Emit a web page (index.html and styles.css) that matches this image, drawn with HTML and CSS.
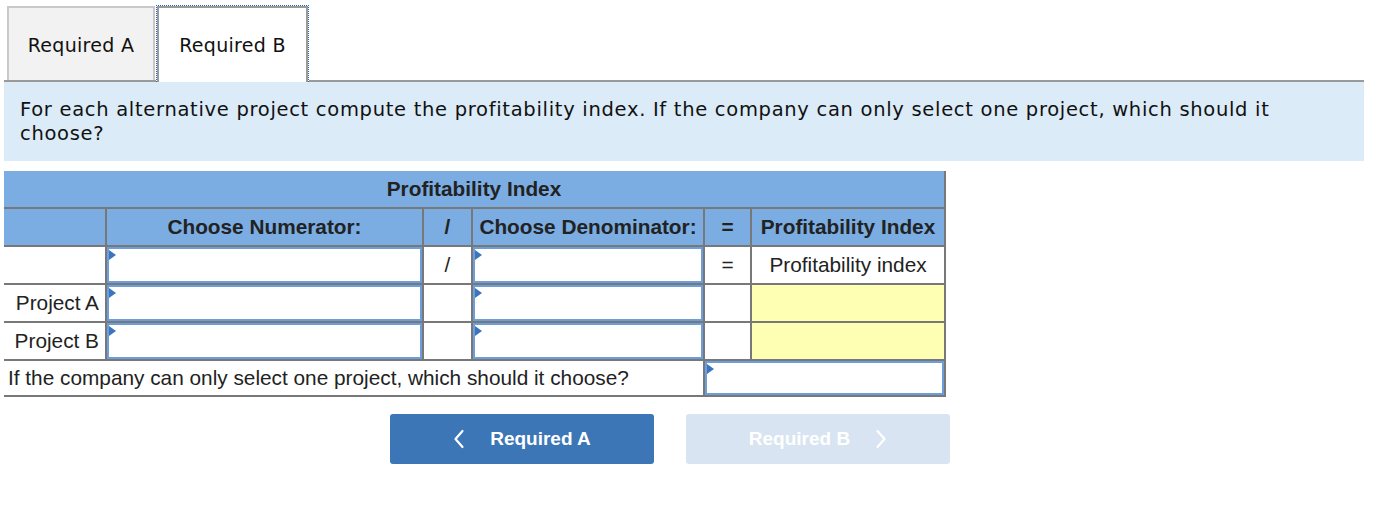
FILE: index.html
```html
<!DOCTYPE html>
<html>
<head>
<meta charset="utf-8">
<link rel="stylesheet" href="styles.css">
</head>
<body>
<div class="page">
  <div class="tabs">
    <div class="tab tab-a">Required A</div>
    <div class="tab tab-b">Required B</div>
  </div>
  <div class="prompt">For each alternative project compute the profitability index. If the company can only select one project, which should it choose?</div>
  <div class="grid">
    <div class="c hd title">Profitability Index</div>

    <div class="c hd"></div>
    <div class="c hd">Choose Numerator:</div>
    <div class="c hd">/</div>
    <div class="c hd">Choose Denominator:</div>
    <div class="c hd">=</div>
    <div class="c hd">Profitability Index</div>

    <div class="c"></div>
    <div class="c inp"></div>
    <div class="c">/</div>
    <div class="c inp"></div>
    <div class="c">=</div>
    <div class="c">Profitability index</div>

    <div class="c label">Project A</div>
    <div class="c inp"></div>
    <div class="c"></div>
    <div class="c inp"></div>
    <div class="c"></div>
    <div class="c yellow"></div>

    <div class="c label">Project B</div>
    <div class="c inp"></div>
    <div class="c"></div>
    <div class="c inp"></div>
    <div class="c"></div>
    <div class="c yellow"></div>

    <div class="c question">If the company can only select one project, which should it choose?</div>
    <div class="c inp answer"></div>
  </div>
  <div class="nav">
    <div class="btn btn-prev">
      <svg class="chev" width="12" height="20" viewBox="0 0 12 20"><polyline points="9.5,2 2.5,10 9.5,18" fill="none" stroke="#ffffff" stroke-width="2.2" stroke-linecap="round" stroke-linejoin="round"/></svg>
      <span>Required A</span>
    </div>
    <div class="btn btn-next">
      <span>Required B</span>
      <svg class="chev" width="12" height="20" viewBox="0 0 12 20"><polyline points="2.5,2 9.5,10 2.5,18" fill="none" stroke="#ffffff" stroke-width="2.2" stroke-linecap="round" stroke-linejoin="round"/></svg>
    </div>
  </div>
</div>
</body>
</html>
```

FILE: styles.css
```css
html, body {
  margin: 0;
  padding: 0;
  background: #ffffff;
}

.page {
  padding-left: 4px;
  width: 1360px;
}

.tabs {
  display: flex;
  align-items: flex-end;
  padding-left: 3px;
  padding-top: 5px;
  border-bottom: 2px solid #9a9a9a;
  height: 75px;
  box-sizing: content-box;
}

.tab {
  box-sizing: border-box;
  display: flex;
  align-items: center;
  justify-content: center;
  font-family: "DejaVu Sans", Verdana, sans-serif;
  font-size: 19px;
  letter-spacing: 0.3px;
  color: #111111;
  padding-top: 2px;
}

.tab-a {
  width: 148px;
  height: 74px;
  background: #f2f2f2;
  border: 2px solid #c9c9c9;
  border-bottom: none;
}

.tab-b {
  width: 153px;
  height: 77px;
  margin-left: 1px;
  margin-bottom: -2px;
  background: #ffffff;
  border: 1px dotted #1f63c4;
  border-bottom: none;
  box-shadow: inset 2px 0 0 #9a9a9a, inset -2px 0 0 #9a9a9a, inset 0 2px 0 #9a9a9a;
}

.prompt {
  background: #dbebf8;
  font-family: "DejaVu Sans", Verdana, sans-serif;
  font-size: 19.5px;
  letter-spacing: 0.7px;
  line-height: 24px;
  color: #111111;
  padding: 16px 40px 15px 16px;
  min-height: 48px;
}

.grid {
  margin-top: 10px;
  display: grid;
  grid-template-columns: 101px 315px 47px 230px 45px 192px;
  grid-template-rows: 36px 36px 36px 36px 36px 34px;
  gap: 2px;
  padding: 0 2px 2px 0;
  width: 942px;
  box-sizing: border-box;
  background: #787878;
  font-family: "Liberation Sans", Arial, sans-serif;
  font-size: 20.8px;
  color: #222222;
}

.c {
  background: #ffffff;
  display: flex;
  align-items: center;
  justify-content: center;
  white-space: nowrap;
}

.hd {
  background: #7badE2;
  font-weight: bold;
}

.title {
  grid-column: 1 / span 6;
}

.label {
  justify-content: flex-end;
  padding-right: 6px;
}

.yellow {
  background: #ffffb3;
}

.question {
  grid-column: 1 / span 4;
  justify-content: flex-start;
  padding-left: 4px;
}

.answer {
  grid-column: 5 / span 2;
}

.inp {
  border: 2px solid #6c9edb;
  position: relative;
  box-sizing: border-box;
}

.inp::before {
  content: "";
  position: absolute;
  left: 0;
  top: 1px;
  width: 0;
  height: 0;
  border-top: 5px solid transparent;
  border-bottom: 5px solid transparent;
  border-left: 7px solid #3b74bf;
}

.nav {
  display: flex;
  gap: 32px;
  margin-top: 17px;
  padding-left: 386px;
}

.btn {
  width: 264px;
  height: 50px;
  border-radius: 3px;
  display: flex;
  align-items: center;
  justify-content: center;
  gap: 25px;
  font-family: "Liberation Sans", Arial, sans-serif;
  font-weight: bold;
  font-size: 19px;
  color: #ffffff;
}

.btn-prev {
  background: #3c76b6;
}

.btn-next {
  background: #d8e4f1;
}

.chev {
  display: block;
}
```
